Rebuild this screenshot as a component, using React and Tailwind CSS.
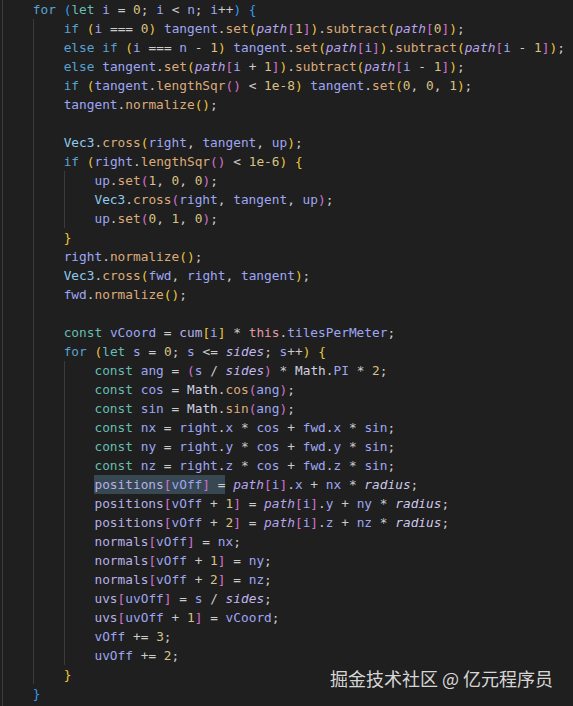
import React from "react";

const CODE = `    for (let i = 0; i < n; i++) {
        if (i === 0) tangent.set(path[1]).subtract(path[0]);
        else if (i === n - 1) tangent.set(path[i]).subtract(path[i - 1]);
        else tangent.set(path[i + 1]).subtract(path[i - 1]);
        if (tangent.lengthSqr() < 1e-8) tangent.set(0, 0, 1);
        tangent.normalize();

        Vec3.cross(right, tangent, up);
        if (right.lengthSqr() < 1e-6) {
            up.set(1, 0, 0);
            Vec3.cross(right, tangent, up);
            up.set(0, 1, 0);
        }
        right.normalize();
        Vec3.cross(fwd, right, tangent);
        fwd.normalize();

        const vCoord = cum[i] * this.tilesPerMeter;
        for (let s = 0; s <= sides; s++) {
            const ang = (s / sides) * Math.PI * 2;
            const cos = Math.cos(ang);
            const sin = Math.sin(ang);
            const nx = right.x * cos + fwd.x * sin;
            const ny = right.y * cos + fwd.y * sin;
            const nz = right.z * cos + fwd.z * sin;
            positions[vOff] = path[i].x + nx * radius;
            positions[vOff + 1] = path[i].y + ny * radius;
            positions[vOff + 2] = path[i].z + nz * radius;
            normals[vOff] = nx;
            normals[vOff + 1] = ny;
            normals[vOff + 2] = nz;
            uvs[uvOff] = s / sides;
            uvs[uvOff + 1] = vCoord;
            vOff += 3;
            uvOff += 2;
        }
    }
    `;

const colors = {
  kw: "text-[#57a3d2]",
  decl: "text-[#66bdb2]",
  this: "text-[#e39aa5]",
  num: "text-[#d9c283]",
  fn: "text-[#dcab7a]",
  cls: "text-[#8fcbef]",
  math: "text-[#d0d0e4]",
  vr: "text-[#9ea6f4]",
  arr: "text-[#b5b1e6]",
  path: "text-[#b9a6f0] italic",
  sides: "text-[#c0b8f0] italic",
  radius: "text-[#d0c9ec] italic",
  op: "text-[#cccccc]",
};

const bracketColors = ["text-[#2f9cf0]", "text-[#ecc63c]", "text-[#d471d1]"];

const arrays = new Set(["positions", "normals", "uvs", "cum"]);

function tokenize(text, state) {
  const re = /(\s+)|(\d+(?:e-\d+)?)|([A-Za-z_]\w*)|(===|<=|\+\+|\+=|[=<>*+\-\/;.,])|([()[\]{}])/g;
  const out = [];
  let m;
  while ((m = re.exec(text))) {
    const t = m[0];
    let cls = colors.op;
    if (m[1]) cls = "";
    else if (m[2]) cls = colors.num;
    else if (m[3]) {
      const next = text[re.lastIndex];
      if (["for", "if", "else"].includes(t)) cls = colors.kw;
      else if (t === "let" || t === "const") cls = colors.decl;
      else if (t === "this") cls = colors.this;
      else if (t === "Vec3") cls = colors.cls;
      else if (t === "Math") cls = colors.math;
      else if (t === "path") cls = colors.path;
      else if (t === "sides") cls = colors.sides;
      else if (t === "radius") cls = colors.radius;
      else if (next === "(") cls = colors.fn;
      else if (arrays.has(t)) cls = colors.arr;
      else cls = colors.vr;
    } else if (m[5]) {
      if ("([{".includes(t)) {
        state.depth++;
        cls = bracketColors[state.depth % 3];
      } else {
        cls = bracketColors[state.depth % 3];
        state.depth--;
      }
    }
    out.push({ t, cls });
  }
  return out;
}

function buildLines() {
  const raw = CODE.split("\n");
  const levels = raw.map(l => (l.trim() ? Math.floor((l.length - l.trimStart().length) / 4) : -1));
  const state = { depth: 2 };
  return raw.map((l, i) => {
    let level = levels[i];
    if (level < 0) {
      let prev = 1;
      let next = 1;
      for (let j = i - 1; j >= 0; j--) if (levels[j] >= 0) { prev = levels[j]; break; }
      for (let j = i + 1; j < raw.length; j++) if (levels[j] >= 0) { next = levels[j]; break; }
      level = Math.min(prev, next);
    }
    return { level, tokens: tokenize(l.trimStart(), state) };
  });
}

const lines = buildLines();
const selectedLine = 25;
const selectedChars = 17;

export default function App() {
  return (
    <div className="relative w-[573px] h-[706px] overflow-hidden bg-[#1f1f1f] pl-[2px] font-['DejaVu_Sans_Mono',monospace] text-[12.8px]">
      {lines.map((line, i) => {
        let pos = 0;
        return (
          <div key={i} className="flex h-[19px] leading-[19px] whitespace-pre">
            {Array.from({ length: line.level }).map((_, k) => (
              <span key={k} className="w-[4ch] shrink-0 border-l border-[#3b3b3b]" />
            ))}
            {line.tokens.map((tok, j) => {
              const start = pos;
              pos += tok.t.length;
              const sel = i === selectedLine && start + tok.t.length <= selectedChars;
              return (
                <span key={j} className={`${tok.cls} ${sel ? "bg-[#384853]" : ""}`}>
                  {tok.t}
                </span>
              );
            })}
          </div>
        );
      })}
      <div className="absolute right-[20px] bottom-[16px] text-[18px] leading-[24px] text-[#d6d6d6] font-['Noto_Sans_CJK_SC',sans-serif]">
        掘金技术社区 @ 亿元程序员
      </div>
    </div>
  );
}
